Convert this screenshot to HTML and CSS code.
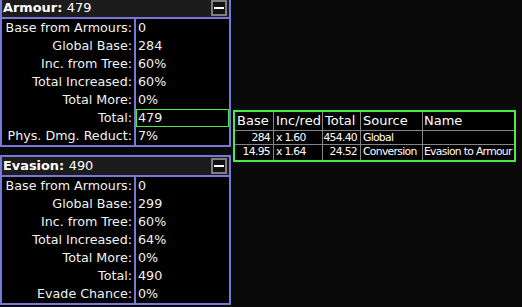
FILE: index.html
```html
<!DOCTYPE html>
<html>
   <head>
      <meta charset="UTF-8">
      <title>Defence Calcs</title>
      <link rel="stylesheet" href="styles.css">
   </head>
   <body>
    <div class="stats">
      <section class="panel panel-first">
        <div class="panel-head">
          <span class="panel-title"><b>Armour: </b>479</span>
          <span class="collapse-btn"></span>
        </div>
        <div class="panel-body">
          <div class="row"><span class="label">Base from Armours:</span><span class="value">0</span></div>
          <div class="row"><span class="label">Global Base:</span><span class="value">284</span></div>
          <div class="row"><span class="label">Inc. from Tree:</span><span class="value">60%</span></div>
          <div class="row"><span class="label">Total Increased:</span><span class="value">60%</span></div>
          <div class="row"><span class="label">Total More:</span><span class="value">0%</span></div>
          <div class="row"><span class="label">Total:</span><span class="value selected">479</span></div>
          <div class="row"><span class="label">Phys. Dmg. Reduct:</span><span class="value">7%</span></div>
        </div>
      </section>

      <section class="panel">
        <div class="panel-head">
          <span class="panel-title"><b>Evasion: </b>490</span>
          <span class="collapse-btn"></span>
        </div>
        <div class="panel-body">
          <div class="row"><span class="label">Base from Armours:</span><span class="value">0</span></div>
          <div class="row"><span class="label">Global Base:</span><span class="value">299</span></div>
          <div class="row"><span class="label">Inc. from Tree:</span><span class="value">60%</span></div>
          <div class="row"><span class="label">Total Increased:</span><span class="value">64%</span></div>
          <div class="row"><span class="label">Total More:</span><span class="value">0%</span></div>
          <div class="row"><span class="label">Total:</span><span class="value">490</span></div>
          <div class="row"><span class="label">Evade Chance:</span><span class="value">0%</span></div>
        </div>
      </section>
    </div>

    <!-- breakdown tooltip for the selected Total row -->
    <div class="breakdown">
      <div class="th">Base</div>
      <div class="th">Inc/red</div>
      <div class="th">Total</div>
      <div class="th">Source</div>
      <div class="th name">Name</div>

      <div class="td num">284</div>
      <div class="td">x 1.60</div>
      <div class="td num">454.40</div>
      <div class="td">Global</div>
      <div class="td name"></div>

      <div class="td num">14.95</div>
      <div class="td">x 1.64</div>
      <div class="td num">24.52</div>
      <div class="td">Conversion</div>
      <div class="td name">Evasion to Armour</div>
    </div>
  </body>
</html>
```

FILE: styles.css
```css
html, body {
margin: 0;
height: 100%;
overflow: hidden;
}
body {
position: relative;
font-family: 'DejaVu Sans', 'Bitstream Vera Sans', Verdana, sans-serif;
font-size: 12.7px;
color: #f2f2f2;
background-color: #0a0a0a;
}
.stats {
display: flex;
flex-direction: column;
gap: 8px;
width: 231px;
margin-top: -3px;
}
.panel {
border: 2px solid #7878d8;
background-color: #000;
}
.panel-head {
display: flex;
justify-content: space-between;
align-items: flex-start;
height: 18px;
background-color: #1c1c1c;
border-bottom: 2px solid #7878d8;
}
.panel-title {
line-height: 18px;
padding-left: 1px;
font-size: 12.9px;
color: #fff;
}
.panel-title b {
font-weight: 700;
}
.collapse-btn {
position: relative;
box-sizing: border-box;
width: 16px;
height: 16px;
margin-right: 2px;
margin-top: 1px;
border: 2px solid #7d7d7d;
background-color: #111;
}
.collapse-btn::after {
content: '';
position: absolute;
left: 1px;
top: 5px;
width: 10px;
height: 2px;
background-color: #fff;
}
.row {
display: flex;
height: 18px;
line-height: 18px;
}
.label {
width: 132px;
box-sizing: border-box;
padding-right: 2px;
text-align: right;
}
.value {
flex: 1;
padding-left: 2px;
border-left: 2px solid #7878d8;
}
.value.selected {
box-shadow: inset 0 0 0 1px #4ae84a;
}

.breakdown {
position: absolute;
left: 233px;
top: 110px;
display: grid;
grid-template-columns: 38px 48px 37px 61px 91px;
grid-template-rows: 18px 13px 15px;
gap: 1px;
background-color: #858585;
border: 2px solid #4ae84a;
}
.th, .td {
background-color: #000;
color: #fff;
white-space: nowrap;
overflow: hidden;
}
.th {
padding-left: 2px;
line-height: 18px;
font-size: 13px;
}
.td {
padding-left: 2px;
font-size: 10.8px;
letter-spacing: -0.7px;
line-height: 13px;
}
.td.num {
text-align: right;
padding-left: 0;
padding-right: 3px;
}
.th.name, .td.name {
padding-left: 1px;
}
```
